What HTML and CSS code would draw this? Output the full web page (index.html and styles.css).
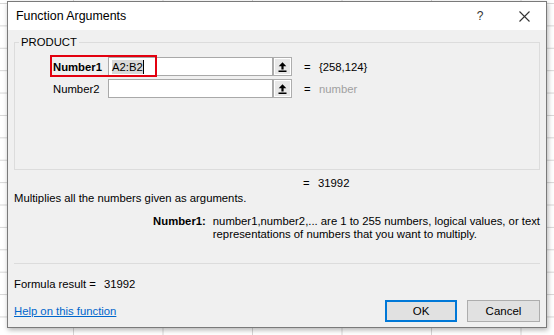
FILE: index.html
```html
<!DOCTYPE html>
<html lang="en">
<head>
    <meta charset="UTF-8">
    <title>Function Arguments</title>
    <link rel="stylesheet" href="styles.css">
</head>
<body>

<div class="dialog">
    <!-- Barre de titre -->
    <div class="titlebar">
        <span class="title">Function Arguments</span>
        <span class="caption-btn help">?</span>
        <span class="caption-btn close">
            <svg width="11" height="11" viewBox="0 0 11 11"><path d="M0.5 0.5 L10.5 10.5 M10.5 0.5 L0.5 10.5" stroke="#333" stroke-width="1.1" fill="none"/></svg>
        </span>
    </div>

    <div class="dialog-body">
        <fieldset class="group">
            <legend>PRODUCT</legend>
            <div class="args">
                <div class="arg-row">
                    <span class="highlight"></span>
                    <label class="arg-label required">Number1</label>
                    <div class="arg-input"><span class="selected">A2:B2</span><span class="caret"></span></div>
                    <button class="ref-btn">
                        <svg width="9" height="10" viewBox="0 0 9 10"><path d="M4.5 0.3 L8.3 4.2 L5.6 4.2 L5.6 7.6 L3.4 7.6 L3.4 4.2 L0.7 4.2 Z" fill="#000"/><rect x="0.5" y="8.5" width="8" height="1.5" fill="#000"/></svg>
                    </button>
                    <span class="eq">=</span>
                    <span class="arg-value">{258,124}</span>
                </div>
                <div class="arg-row">
                    <label class="arg-label">Number2</label>
                    <div class="arg-input"></div>
                    <button class="ref-btn">
                        <svg width="9" height="10" viewBox="0 0 9 10"><path d="M4.5 0.3 L8.3 4.2 L5.6 4.2 L5.6 7.6 L3.4 7.6 L3.4 4.2 L0.7 4.2 Z" fill="#000"/><rect x="0.5" y="8.5" width="8" height="1.5" fill="#000"/></svg>
                    </button>
                    <span class="eq">=</span>
                    <span class="arg-value muted">number</span>
                </div>
            </div>
        </fieldset>

        <div class="result-row">
            <span class="eq">=</span>
            <span class="arg-value">31992</span>
        </div>

        <p class="func-desc">Multiplies all the numbers given as arguments.</p>

        <div class="arg-help">
            <span class="arg-help-name">Number1:</span>
            <span class="arg-help-text">number1,number2,... are 1 to 255 numbers, logical values, or text<br>representations of numbers that you want to multiply.</span>
        </div>

        <div class="separator"></div>

        <div class="formula-result">Formula result =<span class="formula-value">31992</span></div>

        <div class="footer">
            <a href="#" class="help-link">Help on this function</a>
            <button class="btn btn-ok">OK</button>
            <button class="btn btn-cancel">Cancel</button>
        </div>
    </div>
</div>

</body>
</html>
```

FILE: styles.css
```css
* {
    margin: 0;
    padding: 0;
    box-sizing: border-box;
}
body {
    width: 554px;
    height: 335px;
    overflow: hidden;
    padding: 1px 0 0 7px;
    font-family: 'Liberation Sans', Arial, sans-serif;
    font-size: 11.3px;
    color: #000;
    background-color: #fff;
    background-image:
        linear-gradient(to right, #d6d6d6 1px, transparent 1px),
        linear-gradient(to bottom, #d6d6d6 1px, transparent 1px);
    background-size: 89.5px 100%, 100% 22.4px;
    background-position: 73px 0, 0 3px;
}

/* Fenêtre */
.dialog {
    width: 540px;
    height: 327px;
    border: 1px solid #7a7a7a;
    background: #f0f0f0;
    box-shadow: 1px 2px 5px rgba(0, 0, 0, 0.3);
}
.titlebar {
    height: 28px;
    background: #fff;
    display: flex;
    align-items: center;
    padding-left: 8px;
}
.title {
    font-size: 12.4px;
    flex: 1;
}
.caption-btn {
    width: 44px;
    height: 28px;
    display: flex;
    align-items: center;
    justify-content: center;
    color: #333;
}
.help {
    font-size: 12px;
}

.dialog-body {
    padding: 0 6px;
}

/* Groupe PRODUCT */
.group {
    margin-top: 5px;
    border: 1px solid #dcdcdc;
    padding: 0;
}
.group legend {
    margin-left: 4px;
    padding: 0 2px;
    line-height: 14px;
}
.args {
    height: 120px;
    padding-top: 8px;
    display: flex;
    flex-direction: column;
    gap: 3px;
}
.arg-row {
    position: relative;
    display: flex;
    align-items: center;
    height: 19px;
}
.highlight {
    position: absolute;
    left: 35px;
    top: -2px;
    width: 107px;
    height: 22px;
    border: 2px solid #e3000f;
}
.arg-label {
    width: 93px;
    padding-left: 38px;
}
.arg-label.required {
    font-weight: bold;
}
.arg-input {
    width: 165px;
    height: 19px;
    background: #fff;
    border: 1px solid #a9a9a9;
    display: flex;
    align-items: center;
    padding-left: 3px;
}
.selected {
    background: #d9d9d9;
    line-height: 14px;
}
.caret {
    width: 1px;
    height: 14px;
    background: #000;
}
.ref-btn {
    width: 19px;
    height: 19px;
    background: #e8e8e8;
    border: 1px solid #adadad;
    box-shadow: inset 0 0 0 1px #fff;
    display: flex;
    align-items: center;
    justify-content: center;
}
.eq {
    width: 6px;
    margin-left: 12px;
    text-align: center;
}
.arg-value {
    margin-left: 9px;
}
.muted {
    color: #a0a0a0;
}

.result-row {
    display: flex;
    align-items: center;
    height: 14px;
    margin-top: 6px;
    padding-left: 277px;
}

.func-desc {
    line-height: 14px;
    margin-top: 1px;
}

.arg-help {
    display: flex;
    margin-top: 10px;
    line-height: 13px;
}
.arg-help-name {
    width: 200px;
    text-align: right;
    font-weight: bold;
    padding-right: 7px;
}
.arg-help-text {
    white-space: nowrap;
}

.separator {
    height: 1px;
    background: #dcdcdc;
    margin-top: 22px;
    width: 526px;
}

.formula-result {
    margin-top: 13px;
    line-height: 14px;
}
.formula-value {
    margin-left: 8px;
}

.footer {
    display: flex;
    align-items: center;
    margin-top: 9px;
}
.help-link {
    color: #0066cc;
    flex: 1;
}
.btn {
    height: 22px;
    font-family: inherit;
    font-size: 11.5px;
    background: #e1e1e1;
    border: 1px solid #adadad;
    margin-left: 10px;
}
.btn-ok {
    width: 72px;
    border: 2px solid #0078d7;
}
.btn-cancel {
    width: 73px;
}
```
